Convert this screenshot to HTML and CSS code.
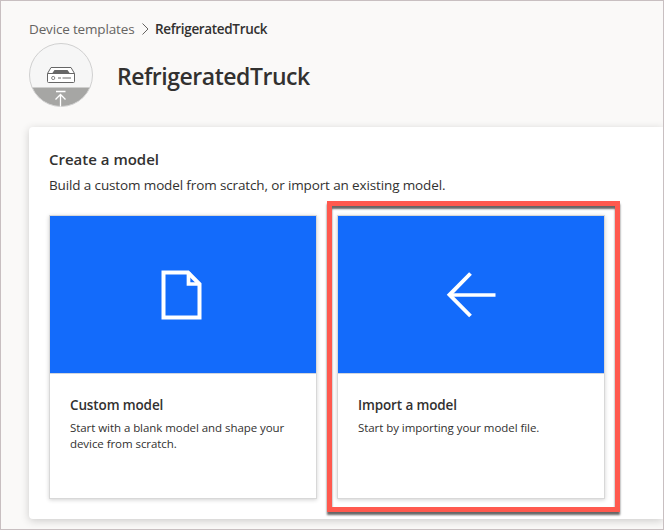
FILE: index.html
```html
<!DOCTYPE html>
<html lang="en">
<head>
<meta charset="utf-8">
<title>RefrigeratedTruck</title>
<link rel="stylesheet" href="styles.css">
</head>
<body>
<div class="page">
  <nav class="breadcrumb">
    <span class="crumb">Device templates</span>
    <svg class="chevron" width="8" height="12" viewBox="0 0 8 12"><path d="M1.500 .5 7 6 1.500 11.500"/></svg>
    <span class="crumb-current">RefrigeratedTruck</span>
  </nav>
  <header class="heading">
    <svg class="avatar" width="64" height="64" viewBox="0 0 64 64">
      <defs><clipPath id="disc"><circle cx="32" cy="32" r="31.500"/></clipPath></defs>
      <circle cx="32" cy="32" r="31.500" fill="#f6f6f6"/>
      <rect x="0" y="44.500" width="64" height="20" fill="#a6a6a4" clip-path="url(#disc)"/>
      <circle cx="32" cy="32" r="31.500" fill="none" stroke="#d0d0d0"/>
      <path d="M18.500 30.500 22 24.500H42L45.500 30.500V38.500Q45.500 39.500 44.500 39.500H19.500Q18.500 39.500 18.500 38.500ZM18.500 30.500H45.500" fill="#fff" stroke="#666"/>
      <path d="M25.500 27H38.500L41 30.500H23Z" fill="#666"/>
      <circle cx="24.200" cy="35" r="1.600" fill="none" stroke="#777" stroke-width=".9"/>
      <path d="M29 35H32M33.500 35H42" fill="none" stroke="#999" stroke-width="1.400"/>
      <path d="M27 48.500H36.500M31.500 63.500V51.500M26.500 56.500 31.500 51.500 36.500 56.500" fill="none" stroke="#fff" stroke-width="1.300"/>
    </svg>
    <h1 class="title">RefrigeratedTruck</h1>
  </header>
  <main class="panel">
    <h2 class="panel-title">Create a model</h2>
    <p class="panel-text">Build a custom model from scratch, or import an existing model.</p>
    <div class="cards">
      <article class="card">
        <div class="card-art">
          <svg class="file-icon" width="42" height="50" viewBox="0 0 42 50"><path d="M2.500 2.500H27L38.500 14V47.500H2.500Z" fill="none" stroke="#fff" stroke-width="4"/><path d="M27.500 2V14H39" fill="none" stroke="#fff" stroke-width="3.700"/></svg>
        </div>
        <div class="card-body">
          <h3 class="card-title">Custom model</h3>
          <p class="card-text">Start with a blank model and shape your<br>device from scratch.</p>
        </div>
      </article>
      <article class="card selected">
        <div class="card-art">
          <svg width="50" height="50" viewBox="0 0 50 50"><path d="M49.500 25H3.500" fill="none" stroke="#fff" stroke-width="3.700"/><path d="M24.500 3.500 3.500 24.800 24.500 46" fill="none" stroke="#fff" stroke-width="3.900"/></svg>
        </div>
        <div class="card-body">
          <h3 class="card-title">Import a model</h3>
          <p class="card-text">Start by importing your model file.</p>
        </div>
      </article>
    </div>
  </main>
</div>
</body>
</html>
```
FILE: styles.css
```css
* { box-sizing: border-box; }
body {
  margin: 0;
  color: #323130;
  font-family: "Open Sans", "Noto Sans", sans-serif;
}
h1, h2, h3, p { margin: 0; white-space: nowrap; }
svg { display: block; flex: none; }
.page {
  width: 664px;
  height: 530px;
  overflow: hidden;
  padding: 18px 0 0 28px;
  border: 1px solid #c8bfc1;
  background: #faf9f8;
}
.breadcrumb {
  display: flex;
  align-items: center;
  height: 20px;
  font-size: 13.500px;
  line-height: 20px;
  white-space: nowrap;
}
.crumb { width: 112px; color: #666462; letter-spacing: -.16px; }
.chevron { width: 8px; margin-right: 6px; fill: none; stroke: #666462; }
.crumb-current { font-weight: 600; letter-spacing: -.33px; }
.heading {
  display: flex;
  align-items: center;
  gap: 24px;
  height: 64px;
  margin-top: 4px;
}
.title {
  font-size: 23px;
  line-height: 32px;
  font-weight: 600;
  letter-spacing: -.47px;
  padding-top: 2px;
}
.panel {
  height: 392px;
  margin-top: 20px;
  padding: 21px 0 0 20px;
  border-radius: 4px 0 0 4px;
  background: #fff;
  box-shadow: 0 2px 8px rgba(0, 0, 0, .18);
}
.panel-title { font-size: 15px; line-height: 22px; font-weight: 600; }
.panel-text { margin-top: 5px; font-size: 13.500px; line-height: 20px; letter-spacing: -.13px; }
.cards { display: flex; gap: 20px; margin-top: 20px; }
.card {
  position: relative;
  width: 268px;
  height: 284px;
  border: 1px solid #d8d8d8;
  box-shadow: 0 1px 4px rgba(0, 0, 0, .18);
}
.card-art {
  display: flex;
  align-items: center;
  justify-content: center;
  height: 158px;
  border-bottom: 1px solid #d0d5de;
  background: #136bfb;
}
.file-icon { margin: 1px 2px 0 0; }
.card-body { padding: 21px 20px; }
.card-title { font-size: 13.500px; line-height: 20px; font-weight: 600; letter-spacing: -.13px; }
.card-text { margin-top: 5px; font-size: 11.500px; line-height: 16px; letter-spacing: -.06px; }
.selected::after {
  content: "";
  position: absolute;
  inset: -15px -16px -14px -11px;
  border: 5px solid #ff594e;
  box-shadow: 0 3px 2px rgba(0, 0, 0, .6), inset 0 3px 2px rgba(0, 0, 0, .6);
}
```
